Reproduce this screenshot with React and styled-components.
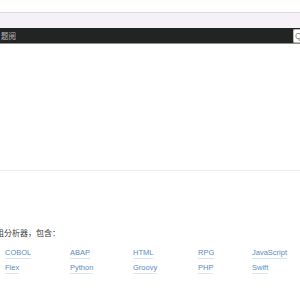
import React from 'react';
import styled, { createGlobalStyle } from 'styled-components';

const GlobalStyle = createGlobalStyle`
  html, body {
    margin: 0;
    padding: 0;
    background: #fff;
    overflow: hidden;
  }
  body {
    font-family: "Liberation Sans", "Noto Sans CJK SC", sans-serif;
  }
`;

const Page = styled.div`
  width: 300px;
  height: 289px;
  overflow: hidden;
  display: flex;
  flex-direction: column;
`;

const TopGap = styled.div`
  height: 12px;
`;

const SubBar = styled.div`
  height: 15px;
  border-top: 1px solid #dcdcdc;
  background: #f6f1f6;
`;

const NavBar = styled.div`
  height: 15px;
  background: #222423;
  border-bottom: 1px solid #8e8e8e;
  display: flex;
  align-items: center;
  justify-content: space-between;
`;

const NavLink = styled.span`
  font-size: 7.5px;
  color: #bdbdbd;
  padding-left: 1px;
  white-space: nowrap;
`;

const SearchBox = styled.div`
  width: 5px;
  height: 12px;
  background: #fff;
  border: 1px solid #bbb;
  border-right: none;
  border-radius: 2px 0 0 2px;
  display: flex;
  align-items: center;
  padding-left: 1px;
  font-size: 9px;
  color: #888;
  overflow: hidden;
`;

const Hero = styled.div`
  height: 126px;
  border-bottom: 1px solid #efefef;
`;

const Section = styled.div`
  padding-top: 58px;
  margin-left: -4px;
  display: flex;
  flex-direction: column;
`;

const Intro = styled.p`
  margin: 0;
  font-size: 8px;
  line-height: 10px;
  color: #3a3a3a;
  white-space: nowrap;
`;

const LangGrid = styled.div`
  display: grid;
  grid-template-columns: 65px 63px 65px 54px auto;
  row-gap: 4px;
  margin-top: 9px;
  padding-left: 9px;
`;

const Lang = styled.a`
  justify-self: start;
  font-size: 7.5px;
  line-height: 10px;
  color: #5a8ec2;
  text-decoration: none;
  border-bottom: 1px solid #d8e6f2;
  white-space: nowrap;
`;

const languages = [
  'COBOL', 'ABAP', 'HTML', 'RPG', 'JavaScript',
  'Flex', 'Python', 'Groovy', 'PHP', 'Swift',
];

const App = () => (
  <>
    <GlobalStyle />
    <Page>
      <TopGap />
      <SubBar />
      <NavBar>
        <NavLink>题阅</NavLink>
        <SearchBox>Q</SearchBox>
      </NavBar>
      <Hero />
      <Section>
        <Intro>组分析器，包含：</Intro>
        <LangGrid>
          {languages.map((lang) => (
            <Lang key={lang} href="#">{lang}</Lang>
          ))}
        </LangGrid>
      </Section>
    </Page>
  </>
);

export default App;
